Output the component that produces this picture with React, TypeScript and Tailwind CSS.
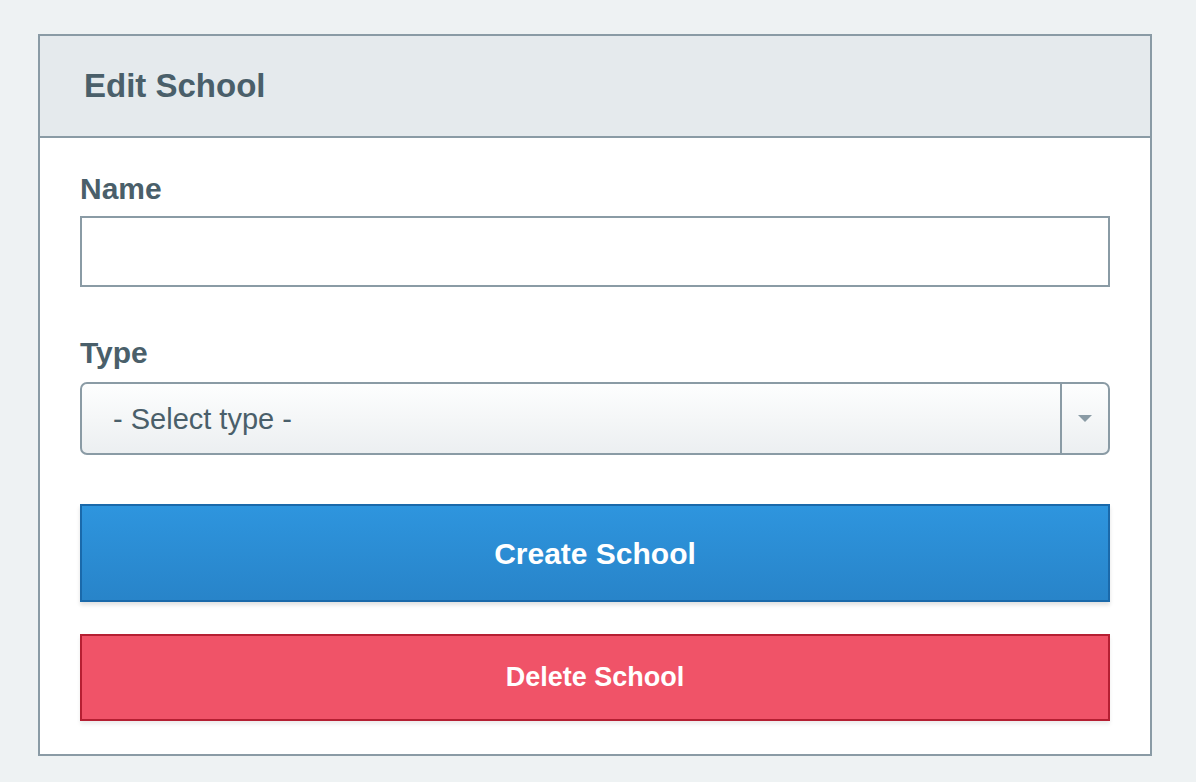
import React from 'react';

const font = { fontFamily: '"Liberation Sans", Arial, sans-serif' };

export default function App() {
  return (
    <div className="min-h-screen w-full bg-[#eef2f3] pt-[34px] pb-[26px]" style={font}>
      <div className="ml-[38px] w-[1114px] border-2 border-[#8a9ba5] bg-white">
        {/* Header */}
        <div className="flex h-[102px] items-center border-b-2 border-[#8a9ba5] bg-[#e5eaed] pl-[44px]">
          <h1 className="text-[33px] font-bold leading-[38px] text-[#4a5f6a]">Edit School</h1>
        </div>

        {/* Body */}
        <div className="px-[40px] pt-[34px] pb-[33px]">
          <label className="block text-[30px] font-bold leading-[34px] text-[#4a5f6a]">Name</label>
          <input
            type="text"
            className="mt-[10px] block h-[71px] w-full border-2 border-[#8a9ba5] bg-white px-4 text-[28px] text-[#4a5f6a] outline-none"
          />

          <label className="mt-[49px] block text-[30px] font-bold leading-[34px] text-[#4a5f6a]">Type</label>
          <div className="mt-[12px] flex h-[73px] w-full overflow-hidden rounded-[7px] border-2 border-[#8a9ba5] bg-gradient-to-b from-[#fdfefe] to-[#eceff1]">
            <div className="flex flex-1 items-center pl-[31px] text-[29px] leading-[34px] text-[#4a5f6a]">
              - Select type -
            </div>
            <div className="flex w-[48px] items-center justify-center border-l-2 border-[#8a9ba5]">
              <svg width="14" height="7" viewBox="0 0 14 7">
                <path d="M0 0 L14 0 L7 7 Z" fill="#8a9ba5" />
              </svg>
            </div>
          </div>

          <button className="mt-[49px] flex h-[98px] w-full items-center justify-center border-2 border-[#1a69aa] bg-gradient-to-b from-[#2e95de] to-[#2884c9] text-[30px] font-bold text-white shadow-[0_3px_4px_rgba(0,0,0,0.12)]">
            Create School
          </button>

          <button className="mt-[32px] flex h-[87px] w-full items-center justify-center border-2 border-[#b51f32] bg-[#f05368] text-[27px] font-bold text-white shadow-[0_3px_4px_rgba(0,0,0,0.08)]">
            Delete School
          </button>
        </div>
      </div>
    </div>
  );
}
